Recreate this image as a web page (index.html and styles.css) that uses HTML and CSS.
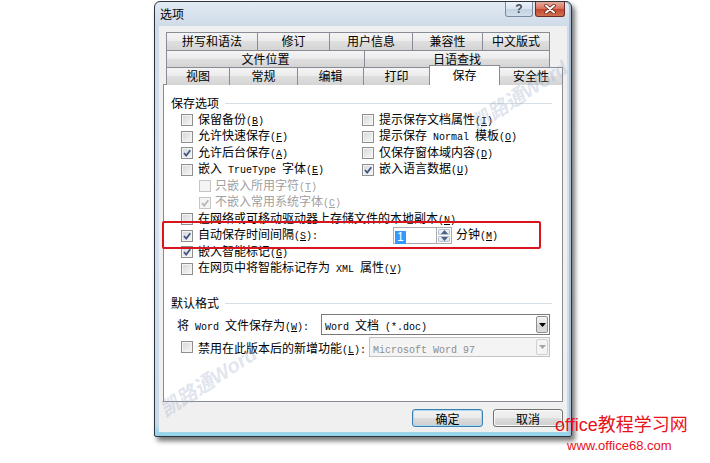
FILE: index.html
```html
<!DOCTYPE html>
<html lang="zh-CN">
<head>
    <meta charset="UTF-8">
    <title>选项</title>
    <link rel="stylesheet" href="styles.css">
</head>
<body>
<div class="stage">
    <div class="window">
        <div class="titlebar">
            <span class="title">选项</span>
            <div class="caption-btns">
                <span class="cbtn help">?</span>
                <span class="cbtn close">
                    <svg width="14" height="10" viewBox="0 0 14 10">
                        <path d="M3 1.5 L11 8.5 M11 1.5 L3 8.5" stroke="#5a1a12" stroke-width="3.4" stroke-linecap="round"/>
                        <path d="M3 1.5 L11 8.5 M11 1.5 L3 8.5" stroke="#fff" stroke-width="2" stroke-linecap="round"/>
                    </svg>
                </span>
            </div>
        </div>

        <div class="client">
            <!-- вкладки в три ряда -->
            <div class="tabs">
                <div class="tabrow r1">
                    <span class="tab">拼写和语法</span>
                    <span class="tab">修订</span>
                    <span class="tab">用户信息</span>
                    <span class="tab">兼容性</span>
                    <span class="tab last">中文版式</span>
                </div>
                <div class="tabrow r2">
                    <span class="tab">文件位置</span>
                    <span class="tab last">日语查找</span>
                </div>
                <div class="tabrow r3">
                    <span class="tab">视图</span>
                    <span class="tab">常规</span>
                    <span class="tab">编辑</span>
                    <span class="tab">打印</span>
                    <span class="tab active">保存</span>
                    <span class="tab last">安全性</span>
                </div>
            </div>

            <div class="panel">
                <div class="legend">保存选项</div>
                <div class="opts">
                    <div class="grid2">
                        <label class="opt"><span class="cb"></span><span>保留备份<span class="en">(<u>B</u>)</span></span></label>
                        <label class="opt"><span class="cb"></span><span>提示保存文档属性<span class="en">(<u>I</u>)</span></span></label>
                        <label class="opt"><span class="cb"></span><span>允许快速保存<span class="en">(<u>F</u>)</span></span></label>
                        <label class="opt"><span class="cb"></span><span>提示保存<span class="en"> Normal </span>模板<span class="en">(<u>O</u>)</span></span></label>
                        <label class="opt"><span class="cb checked"><svg viewBox="0 0 10 10"><path d="M2 5 L4.2 7.6 L8.3 2.2"/></svg></span><span>允许后台保存<span class="en">(<u>A</u>)</span></span></label>
                        <label class="opt"><span class="cb"></span><span>仅保存窗体域内容<span class="en">(<u>D</u>)</span></span></label>
                        <label class="opt"><span class="cb"></span><span>嵌入<span class="en"> TrueType </span>字体<span class="en">(<u>E</u>)</span></span></label>
                        <label class="opt"><span class="cb checked"><svg viewBox="0 0 10 10"><path d="M2 5 L4.2 7.6 L8.3 2.2"/></svg></span><span>嵌入语言数据<span class="en">(<u>U</u>)</span></span></label>
                    </div>
                    <label class="opt sub disabled"><span class="cb"></span><span>只嵌入所用字符<span class="en">(<u>T</u>)</span></span></label>
                    <label class="opt sub disabled"><span class="cb checked"><svg viewBox="0 0 10 10"><path d="M2 5 L4.2 7.6 L8.3 2.2"/></svg></span><span>不嵌入常用系统字体<span class="en">(<u>C</u>)</span></span></label>
                    <label class="opt"><span class="cb"></span><span>在网络或可移动驱动器上存储文件的本地副本<span class="en">(<u>N</u>)</span></span></label>
                    <div class="opt autosave">
                        <span class="cb checked"><svg viewBox="0 0 10 10"><path d="M2 5 L4.2 7.6 L8.3 2.2"/></svg></span>
                        <span class="lbl">自动保存时间间隔<span class="en">(<u>S</u>):</span></span>
                        <span class="spin">
                            <span class="spin-input"><span class="sel">1</span></span>
                            <span class="spin-btns">
                                <span class="sbtn"><svg width="7" height="4" viewBox="0 0 7 4"><path d="M0 4 L3.5 0 L7 4Z" fill="#4d6185"/></svg></span>
                                <span class="sbtn"><svg width="7" height="4" viewBox="0 0 7 4"><path d="M0 0 L3.5 4 L7 0Z" fill="#4d6185"/></svg></span>
                            </span>
                        </span>
                        <span>分钟<span class="en">(<u>M</u>)</span></span>
                    </div>
                    <label class="opt"><span class="cb checked"><svg viewBox="0 0 10 10"><path d="M2 5 L4.2 7.6 L8.3 2.2"/></svg></span><span>嵌入智能标记<span class="en">(<u>G</u>)</span></span></label>
                    <label class="opt"><span class="cb"></span><span>在网页中将智能标记存为<span class="en"> XML </span>属性<span class="en">(<u>V</u>)</span></span></label>
                </div>

                <div class="legend second">默认格式</div>
                <div class="fmt-row">
                    <span class="fmt-lbl">将<span class="en"> Word </span>文件保存为<span class="en">(<u>W</u>):</span></span>
                    <span class="combo wide">
                        <span class="val"><span class="en">Word </span>文档<span class="en"> (*.doc)</span></span>
                        <span class="drop"><svg width="7" height="4" viewBox="0 0 7 4"><path d="M0 0 L3.5 4 L7 0Z" fill="#000"/></svg></span>
                    </span>
                </div>
                <div class="fmt-row second">
                    <span class="cb"></span>
                    <span class="fmt-lbl2">禁用在此版本后的新增功能<span class="en">(<u>L</u>):</span></span>
                    <span class="combo off">
                        <span class="val"><span class="en">Microsoft Word 97</span></span>
                        <span class="drop"><svg width="7" height="4" viewBox="0 0 7 4"><path d="M0 0 L3.5 4 L7 0Z" fill="#a3a3a3"/></svg></span>
                    </span>
                </div>
            </div>

            <div class="buttons">
                <button class="btn default">确定</button>
                <button class="btn">取消</button>
            </div>
        </div>
    </div>

    <!-- поверх окна: водяные знаки, рамка, логотип -->
    <div class="wm wm1">凯路通Word</div>
    <div class="wm wm2">凯路通Word</div>
    <div class="mark"></div>
    <div class="logo">
        <div class="logo-top">office教程学习网</div>
        <div class="logo-url">www.office68.com</div>
    </div>
</div>
</body>
</html>
```

FILE: styles.css
```css
* {
    box-sizing: border-box;
}
body {
    margin: 0;
    background: #fff;
    font-family: "Noto Sans CJK SC", sans-serif;
    font-size: 12px;
    color: #000;
}
.stage {
    position: relative;
    width: 710px;
    height: 463px;
    padding: 1px 0 0 154px;
    overflow: hidden;
}
.window {
    width: 418px;
    height: 436px;
    border: 1px solid #2b3440;
    border-radius: 6px 6px 2px 2px;
    background: linear-gradient(to bottom, #e2eaf3 0, #cfdbe8 24px, #d6e1ec 50%, #c9daea 97%, #8fd3ea 100%);
    padding: 0 4px 4px;
    box-shadow: 3px 4px 5px rgba(0, 0, 0, 0.55), inset -2px 0 0 #a9bfd6;
}
.titlebar {
    height: 24px;
    display: flex;
    justify-content: space-between;
    padding-left: 1px;
}
.title {
    line-height: 24px;
    font-size: 12px;
}
.caption-btns {
    display: flex;
    gap: 2px;
    margin-right: 2px;
}
.cbtn {
    height: 15px;
    border-radius: 0 0 3px 3px;
    display: flex;
    align-items: center;
    justify-content: center;
}
.help {
    width: 28px;
    border: 1px solid #7c8ca0;
    border-top: none;
    background: linear-gradient(to bottom, #eef3f8, #d8e2ed 50%, #c3d1e0 50%, #d2deea);
    color: #3d4f66;
    font-family: "Liberation Sans", sans-serif;
    font-weight: bold;
    font-size: 12px;
    line-height: 13px;
}
.close {
    width: 30px;
    border: 1px solid #6d2b23;
    border-top: none;
    background: linear-gradient(to bottom, #e7ab9b, #d5735f 48%, #c4462f 52%, #d0704f);
}
.client {
    height: 406px;
    background: #f0f0f0;
    padding: 6px 4px 0;
}

/* вкладки */
.tabs {
    margin-left: 3px;
}
.tabrow {
    display: grid;
}
.r1 {
    grid-template-columns: 91px 72px 83px 70px 68px;
    height: 18px;
}
.r2 {
    grid-template-columns: 198px 186px;
    height: 17px;
}
.r3 {
    grid-template-columns: 63px 68px 66px 66px 70px 64px;
    height: 17px;
}
.tab {
    border-top: 1px solid #898c95;
    border-left: 1px solid #898c95;
    background: linear-gradient(to bottom, #f4f4f4 0%, #ececec 45%, #dfdfdf 50%, #d4d4d4 100%);
    text-align: center;
    line-height: 16px;
    font-size: 12px;
    white-space: nowrap;
}
.tab.last {
    border-right: 1px solid #898c95;
}
.tab.active {
    position: relative;
    z-index: 1;
    margin-top: -2px;
    height: 20px;
    background: #fff;
    border-right: 1px solid #898c95;
    margin-right: -1px;
    line-height: 18px;
}

/* страница вкладки */
.panel {
    height: 318px;
    border: 1px solid #898c95;
    background: #fff;
    padding: 10px 10px 0 7px;
}
.legend {
    display: flex;
    align-items: center;
    height: 16px;
    line-height: 16px;
}
.legend::after {
    content: '';
    flex: 1;
    height: 1px;
    background: #d5dfe5;
    margin-left: 6px;
}
.legend.second {
    margin-top: 18px;
}
.opts {
    margin: 1px 0 0 10px;
}
.grid2 {
    display: grid;
    grid-template-columns: 181px 1fr;
}
.opt {
    display: flex;
    align-items: center;
    gap: 5px;
    height: 16.5px;
    white-space: nowrap;
    line-height: 16px;
}
.opt.sub {
    margin-left: 18px;
    gap: 4px;
}
.disabled {
    color: #a0a0a0;
}
.en {
    font-family: "Liberation Mono", monospace;
    font-size: 10px;
    white-space: pre;
}

/* флажки */
.cb {
    flex: 0 0 12px;
    width: 12px;
    height: 12px;
    border: 1px solid #8f8f8f;
    background: linear-gradient(135deg, #d3d6da, #f8f8f8);
    box-shadow: inset 0 0 0 1px #f4f4f4;
    display: flex;
    align-items: center;
    justify-content: center;
}
.cb svg {
    width: 10px;
    height: 10px;
}
.cb svg path {
    fill: none;
    stroke: #3f5482;
    stroke-width: 1.7;
}
.disabled .cb {
    border-color: #c5c5c5;
    background: #f4f4f4;
}
.disabled .cb svg path {
    stroke: #b4b4b4;
}

/* счётчик минут */
.autosave .lbl {
    width: 195px;
}
.autosave {
    gap: 0;
}
.autosave .cb {
    margin-right: 5px;
}
.spin {
    display: flex;
    height: 17px;
    margin-right: 4px;
}
.spin-input {
    width: 43px;
    border: 1px solid #abadb3;
    border-right: none;
    background: #fff;
    padding: 1px 0 0 1px;
    line-height: 13px;
}
.sel {
    display: inline-block;
    background: #3399ff;
    color: #fff;
    padding: 0 2px;
    font-family: "Liberation Sans", sans-serif;
}
.spin-btns {
    width: 16px;
    display: flex;
    flex-direction: column;
    border: 1px solid #abadb3;
    background: #fff;
    padding: 1px;
    gap: 1px;
}
.sbtn {
    flex: 1;
    display: flex;
    align-items: center;
    justify-content: center;
    border: 1px solid #b7c3d2;
    border-radius: 1px;
    background: linear-gradient(to bottom, #f2f5f8, #dde4ec);
}

/* формат по умолчанию */
.fmt-row {
    display: flex;
    align-items: center;
    margin: 3px 0 0 6px;
    height: 21px;
    white-space: nowrap;
}
.fmt-lbl {
    width: 144px;
}
.fmt-row.second {
    margin: 2px 0 0 10px;
    height: 20px;
}
.fmt-row.second .cb {
    margin-right: 5px;
}
.fmt-lbl2 {
    width: 171px;
}
.combo {
    display: flex;
    height: 100%;
    border: 1px solid #7a7a7a;
    background: #fff;
    padding: 1px;
}
.combo.wide {
    width: 229px;
}
.combo.off {
    width: 181px;
    border-color: #c2c2c2;
    background: #f4f4f4;
    color: #8d8d8d;
}
.combo .val {
    flex: 1;
    padding-left: 2px;
    line-height: 17px;
}
.combo .drop {
    width: 12px;
    display: flex;
    align-items: center;
    justify-content: center;
    border: 1px solid #8e8f8f;
    border-radius: 2px;
    background: linear-gradient(to bottom, #f3f3f3, #e2e2e2 50%, #d4d4d4 50%, #dcdcdc);
}
.combo.off .drop {
    border-color: #d0d0d0;
    background: #f4f4f4;
}

/* кнопки */
.buttons {
    display: flex;
    justify-content: flex-end;
    gap: 10px;
    margin-top: 7px;
}
.btn {
    width: 70px;
    height: 18px;
    padding: 0;
    border: 1px solid #707070;
    border-radius: 3px;
    background: linear-gradient(to bottom, #f2f2f2 0%, #ebebeb 50%, #dddddd 50%, #cfcfcf 100%);
    box-shadow: inset 0 0 0 1px #fbfbfb;
    font-family: "Noto Sans CJK SC", sans-serif;
    font-size: 12px;
    line-height: 15px;
    color: #000;
}
.btn.default {
    width: 71px;
    border-color: #3c7fb1;
    box-shadow: inset 0 0 0 1px #a8daf3;
}

/* накладки */
.wm {
    position: absolute;
    font-family: "Liberation Sans", "Noto Sans CJK SC", sans-serif;
    font-weight: bold;
    font-style: italic;
    font-size: 20px;
    color: rgba(150, 165, 195, 0.3);
    white-space: nowrap;
    transform: rotate(-33deg);
}
.wm1 {
    left: 152px;
    top: 366px;
}
.wm2 {
    left: 463px;
    top: 80px;
}
.mark {
    position: absolute;
    left: 162px;
    top: 221px;
    width: 379px;
    height: 28px;
    border: 2px solid #d8151d;
    border-radius: 2px;
}
.logo {
    position: absolute;
    left: 555px;
    top: 414px;
    color: #e8101a;
}
.logo-top {
    font-family: "Liberation Sans", "Noto Sans CJK SC", sans-serif;
    font-size: 18px;
    line-height: 22px;
}
.logo-url {
    font-family: "Liberation Sans", sans-serif;
    font-size: 13px;
    line-height: 16px;
    margin: 2px 0 0 12px;
}
```
